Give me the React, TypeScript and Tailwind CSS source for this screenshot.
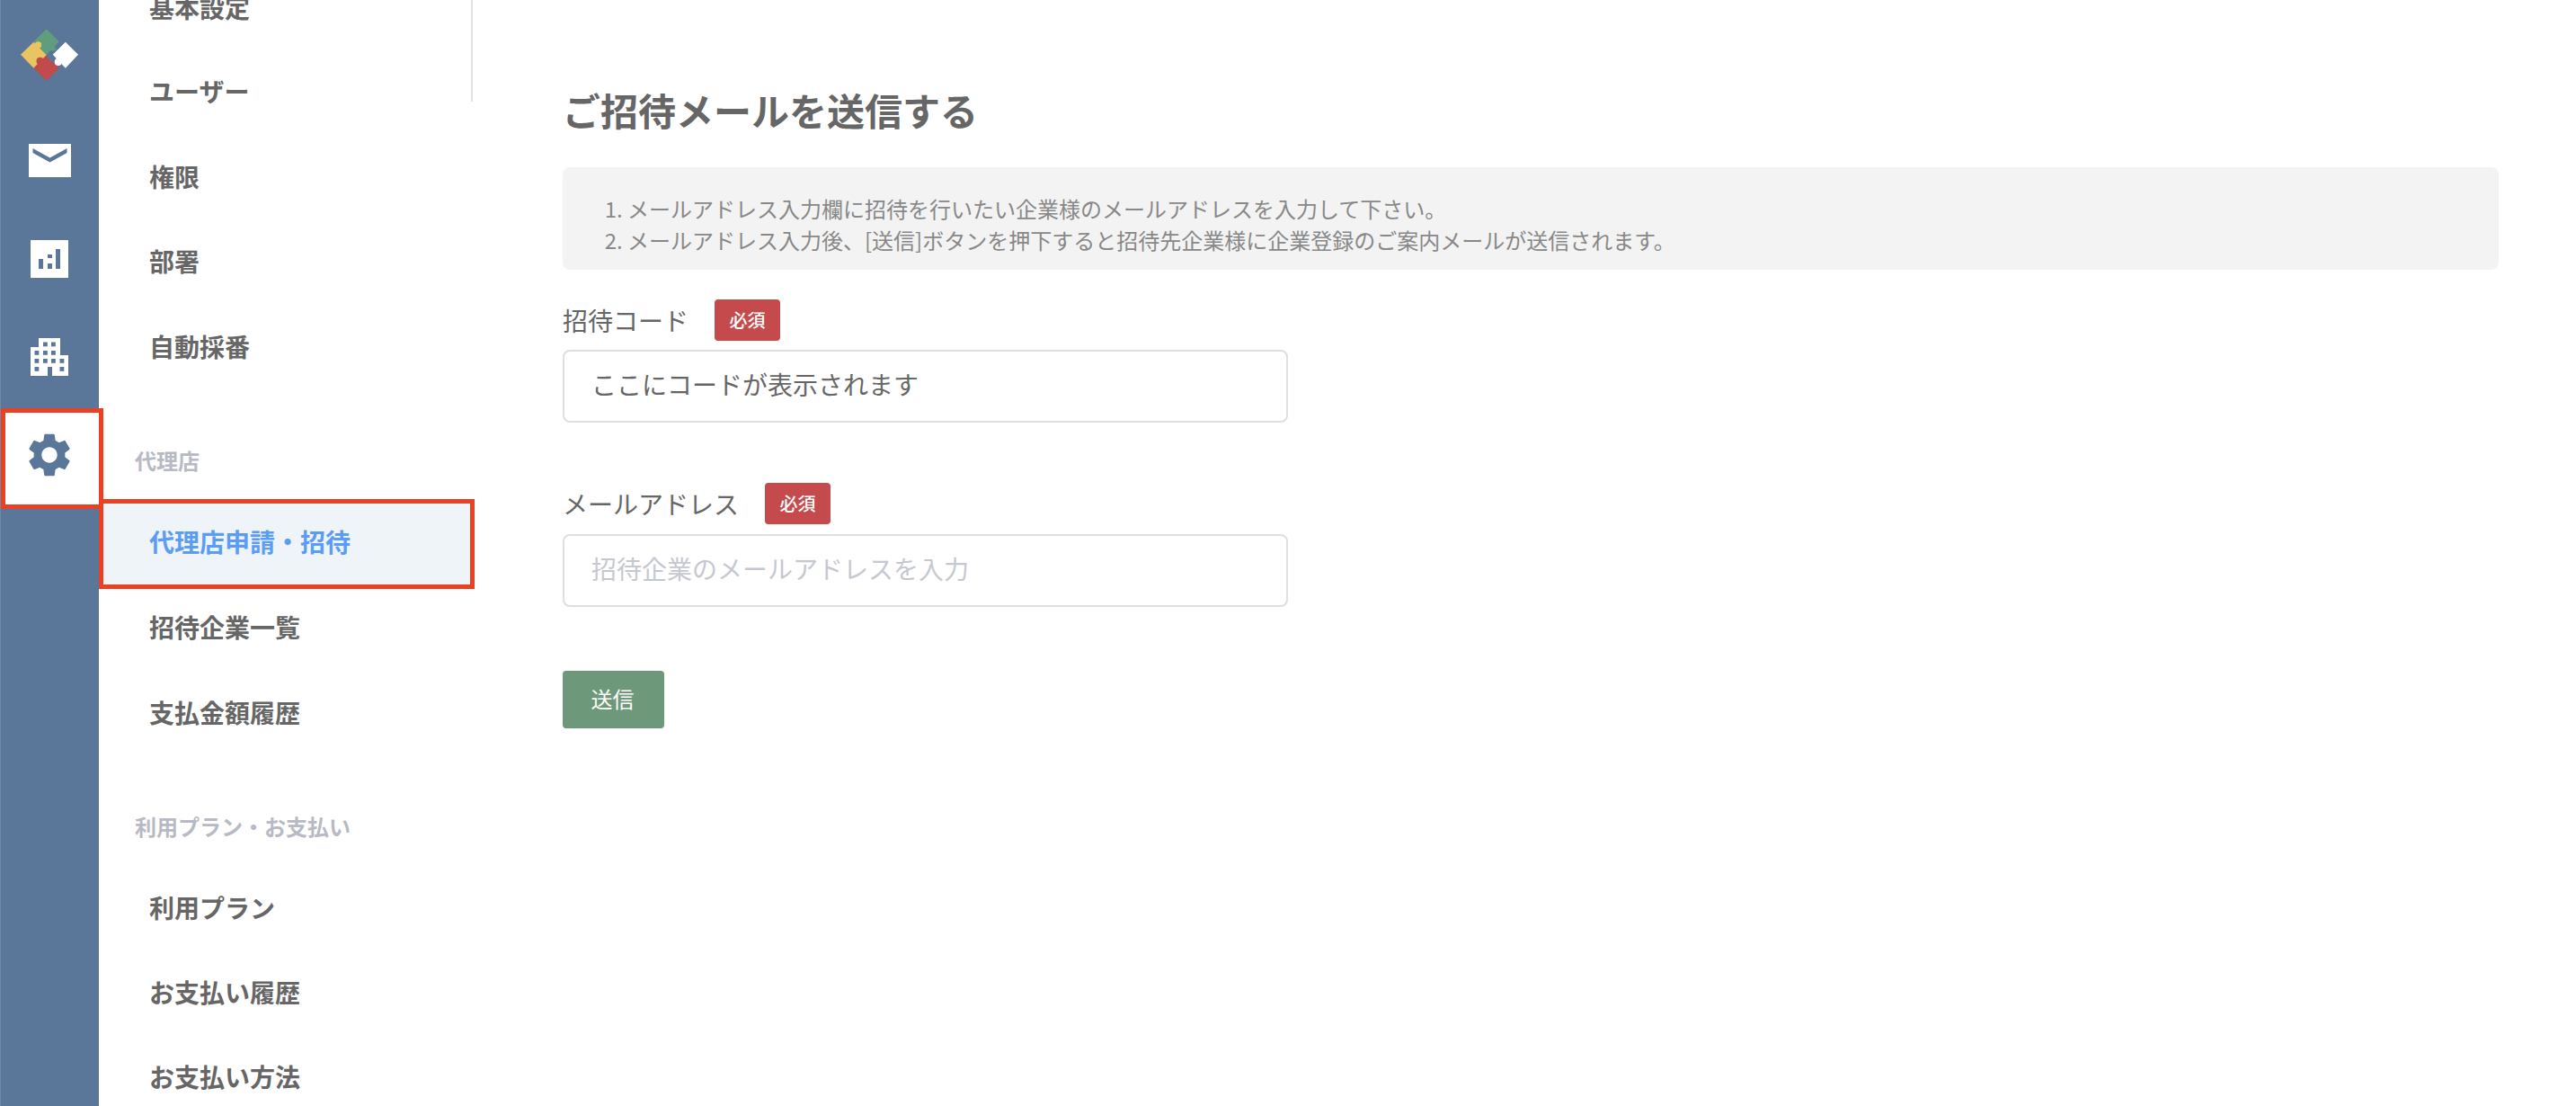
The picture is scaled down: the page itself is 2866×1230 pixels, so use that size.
import React from 'react';

const groupOne = ['ユーザー', '権限', '部署', '自動採番'];
const groupTwo = ['招待企業一覧', '支払金額履歴'];
const groupThree = ['利用プラン', 'お支払い履歴', 'お支払い方法'];

function PuzzleLogo() {
  return (
    <svg width="64" height="58" viewBox="70 97 190 171">
      <polygon points="155,97 197,139 155,182 113,139" fill="#5f9d7c" />
      <circle cx="178" cy="158" r="12" fill="#5f9d7c" />
      <polygon points="113,140 156,183 113,226 70,182" fill="#e8c463" />
      <circle cx="128" cy="150" r="11" fill="#e8c463" />
      <polygon points="155,184 197,226 155,268 113,226" fill="#c14a4a" />
      <circle cx="134" cy="203" r="12" fill="#c14a4a" />
      <polygon points="218,140 260,182 218,226 176,182" fill="#ffffff" />
      <circle cx="194" cy="206" r="12" fill="#ffffff" />
      <circle cx="172" cy="196" r="9" fill="#5a7699" />
      <circle cx="190" cy="157" r="7" fill="#5a7699" />
    </svg>
  );
}

function MailIcon() {
  return (
    <svg width="47" height="37" viewBox="0 0 47 37">
      <rect width="47" height="37" fill="#ffffff" />
      <path d="M4.5 5 L23.5 15.5 L42.5 5 V10 L23.5 20.5 L4.5 10 Z" fill="#5a7699" />
    </svg>
  );
}

function ChartIcon() {
  return (
    <svg width="42" height="42" viewBox="0 0 42 42">
      <rect width="42" height="42" fill="#ffffff" />
      <rect x="9" y="21" width="5" height="11" fill="#5a7699" />
      <rect x="19" y="16" width="5" height="4" fill="#5a7699" />
      <rect x="19" y="26" width="5" height="6" fill="#5a7699" />
      <rect x="28" y="10" width="5" height="22" fill="#5a7699" />
    </svg>
  );
}

function BuildingIcon() {
  const cells = [
    [14, 4.5], [23, 4.5],
    [4.5, 14], [14, 14], [23, 14],
    [4.5, 23], [14, 23], [23, 23], [32.5, 23],
    [4.5, 32], [32.5, 32],
  ];
  return (
    <svg width="42" height="42" viewBox="0 0 42 42">
      <path d="M9 10 V0 H33 V19 H42 V42 H24 V32 H19 V42 H0 V10 Z" fill="#ffffff" />
      {cells.map(([x, y]) => (
        <rect key={`${x}-${y}`} x={x} y={y} width="4.8" height="4.8" fill="#5a7699" />
      ))}
    </svg>
  );
}

function GearIcon() {
  return (
    <svg width="58" height="58" viewBox="0 0 24 24" fill="#5a7699">
      <path d="M19.14 12.94c.04-.3.06-.61.06-.94 0-.32-.02-.64-.07-.94l2.03-1.58c.18-.14.23-.41.12-.61l-1.92-3.32c-.12-.22-.37-.29-.59-.22l-2.39.96c-.5-.38-1.03-.7-1.62-.94l-.36-2.54c-.04-.24-.24-.41-.48-.41h-3.84c-.24 0-.43.17-.47.41l-.36 2.54c-.59.24-1.13.57-1.62.94l-2.39-.96c-.22-.08-.47 0-.59.22L2.74 8.87c-.12.21-.08.47.12.61l2.03 1.58c-.05.3-.09.63-.09.94s.02.64.07.94l-2.03 1.58c-.18.14-.23.41-.12.61l1.92 3.32c.12.22.37.29.59.22l2.39-.96c.5.38 1.03.7 1.62.94l.36 2.54c.05.24.24.41.48.41h3.84c.24 0 .44-.17.47-.41l.36-2.54c.59-.24 1.13-.56 1.62-.94l2.39.96c.22.08.47 0 .59-.22l1.92-3.32c.12-.22.07-.47-.12-.61l-2.01-1.58zM12 15.6c-1.98 0-3.6-1.62-3.6-3.6s1.62-3.6 3.6-3.6 3.6 1.62 3.6 3.6-1.62 3.6-3.6 3.6z" />
    </svg>
  );
}

function Rail() {
  return (
    <div className="w-[110px] shrink-0 bg-[#5a7699] border-l border-l-[#6f8aa9] flex flex-col">
      <div className="h-[123px] pt-[32px] pr-px flex justify-center">
        <PuzzleLogo />
      </div>
      <div className="h-[110px] pr-px flex items-center justify-center"><MailIcon /></div>
      <div className="h-[110px] pr-px flex items-center justify-center"><ChartIcon /></div>
      <div className="h-[111px] pr-px pb-[3px] flex items-center justify-center"><BuildingIcon /></div>
      <div className="relative h-[112px] pr-px pb-[8px] bg-white flex items-center justify-center">
        <GearIcon />
        <div className="absolute left-0 top-0 w-[114px] h-[112px] border-[5px] border-[#ea4125]" />
      </div>
    </div>
  );
}

function NavItem({ label, size = 'h-[94.7px]' }: { label: string; size?: string }) {
  return (
    <div className={`pl-[56px] flex items-center text-[28px] font-bold text-[#666666] ${size}`}>
      {label}
    </div>
  );
}

function SectionLabel({ label, size }: { label: string; size: string }) {
  return (
    <div className={`pl-[40px] text-[24px] font-bold leading-[36px] text-[#b7bac4] ${size}`}>
      {label}
    </div>
  );
}

function Sidebar() {
  return (
    <div className="relative w-[418px] shrink-0 -mt-[37px]">
      <div className="absolute right-[2px] top-0 h-[150px] w-[2px] bg-[#e2e2e2]" />
      <NavItem label="基本設定" size="h-[90.7px]" />
      {groupOne.map((item) => (
        <NavItem key={item} label={item} />
      ))}
      <SectionLabel label="代理店" size="h-[122.5px] pt-[62px]" />
      <div className="relative h-[95px] pl-[56px] flex items-center bg-[#eff4f9] text-[28px] font-bold text-[#5b9df5]">
        代理店申請・招待
        <div className="absolute left-0 top-0 w-[418px] h-[100px] border-[5px] border-[#ea4125]" />
      </div>
      {groupTwo.map((item) => (
        <NavItem key={item} label={item} />
      ))}
      <SectionLabel label="利用プラン・お支払い" size="h-[122.5px] pt-[62px]" />
      {groupThree.map((item) => (
        <NavItem key={item} label={item} size="h-[94px]" />
      ))}
    </div>
  );
}

function FieldLabel({ label }: { label: string }) {
  return (
    <div className="flex items-center h-[46px] gap-[29px]">
      <span className="text-[28px] text-[#666666]">{label}</span>
      <span className="w-[73px] h-[46px] rounded-[4px] bg-[#c44a4b] flex items-center justify-center text-[20px] font-medium text-white">
        必須
      </span>
    </div>
  );
}

export default function App() {
  return (
    <div
      className="flex h-[1230px] w-[2866px] overflow-hidden bg-white"
      style={{ fontFamily: '"Noto Sans CJK JP", "Noto Sans", sans-serif' }}
    >
      <Rail />
      <Sidebar />
      <div className="flex-1 pl-[98px] pr-[86px] pt-[96px]">
        <h1 className="text-[42px] leading-[52px] font-bold text-[#666666]">ご招待メールを送信する</h1>
        <div className="mt-[38px] h-[114px] rounded-[8px] bg-[#f3f3f3] pt-[28px]">
          <ol className="list-decimal pl-[72px] text-[24px] leading-[35px] text-[#888888]">
            <li>メールアドレス入力欄に招待を行いたい企業様のメールアドレスを入力して下さい。</li>
            <li>メールアドレス入力後、[送信]ボタンを押下すると招待先企業様に企業登録のご案内メールが送信されます。</li>
          </ol>
        </div>
        <div className="mt-[33px]">
          <FieldLabel label="招待コード" />
        </div>
        <input
          readOnly
          value="ここにコードが表示されます"
          className="mt-[10px] block w-[807px] h-[81px] rounded-[8px] border-2 border-[#dedee4] pl-[30px] pb-[6px] text-[28px] text-[#666666] outline-none"
        />
        <div className="mt-[67px]">
          <FieldLabel label="メールアドレス" />
        </div>
        <input
          placeholder="招待企業のメールアドレスを入力"
          className="mt-[11px] block w-[807px] h-[81px] rounded-[8px] border-2 border-[#dedee4] pl-[30px] pb-[6px] text-[28px] text-[#666666] outline-none placeholder:text-[#c6c8d0]"
        />
        <button className="mt-[71px] block w-[113px] h-[64px] rounded-[4px] bg-[#6d997a] pr-[2px] pb-[2px] text-[24px] text-white">
          送信
        </button>
      </div>
    </div>
  );
}
